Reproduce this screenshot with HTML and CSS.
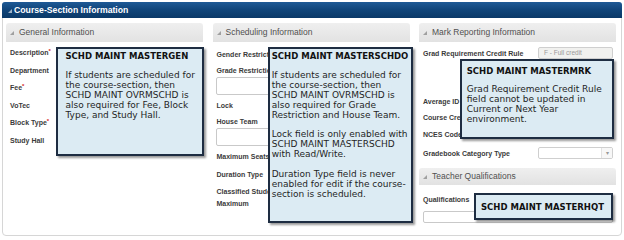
FILE: index.html
```html
<!DOCTYPE html>
<html lang="en">

<head>
    <meta charset="UTF-8">
    <title>Course-Section Information</title>
    <link rel="stylesheet" href="styles.css">
</head>

<body>

    <div class="section">
        <div class="section-head"><span class="caret"></span>Course-Section Information</div>

        <div class="columns">
            <!-- general -->
            <div class="panel">
                <div class="panel-head"><span class="caret"></span>General Information</div>
                <div class="panel-body general">
                    <div class="field"><label>Description<sup>*</sup></label></div>
                    <div class="field"><label>Department</label></div>
                    <div class="field"><label>Fee<sup>*</sup></label></div>
                    <div class="field"><label>VoTec</label></div>
                    <div class="field"><label>Block Type<sup>*</sup></label></div>
                    <div class="field"><label>Study Hall</label></div>
                </div>
            </div>

            <!-- scheduling -->
            <div class="panel">
                <div class="panel-head"><span class="caret"></span>Scheduling Information</div>
                <div class="panel-body sched">
                    <div class="field"><label>Gender Restriction</label></div>
                    <div class="field"><label>Grade Restriction</label></div>
                    <div class="box"></div>
                    <div class="field"><label>Lock</label></div>
                    <div class="field"><label>House Team</label></div>
                    <div class="box"></div>
                    <div class="field"><label>Maximum Seats</label></div>
                    <div class="field wide"><label>Duration Type</label></div>
                    <div class="field wide two"><label>Classified Students Maximum</label></div>
                </div>
            </div>

            <!-- mark reporting -->
            <div class="panel">
                <div class="panel-head"><span class="caret"></span>Mark Reporting Information</div>
                <div class="panel-body mark">
                    <div class="row">
                        <label>Grad Requirement Credit Rule</label>
                        <div class="ctl disabled">F - Full credit</div>
                    </div>
                    <div class="row avg"><label>Average ID</label></div>
                    <div class="row course"><label>Course Credit</label></div>
                    <div class="row nces"><label>NCES Code</label></div>
                    <div class="row gradebook">
                        <label>Gradebook Category Type</label>
                        <div class="ctl select"><span class="arrow">&#9662;</span></div>
                    </div>
                </div>
                <div class="panel-head sub"><span class="caret"></span>Teacher Qualifications</div>
                <div class="panel-body quals">
                    <div class="field"><label>Qualifications</label></div>
                    <div class="box small"></div>
                </div>
            </div>
        </div>

        <!-- help tips -->
        <div class="tip tip-gen">
            <p class="tip-title">SCHD MAINT MASTERGEN</p>
            <p>If students are scheduled for<br>the course-section, then<br>SCHD MAINT OVRMSCHD is<br>also required for Fee, Block<br>Type, and Study Hall.</p>
        </div>

        <div class="tip tip-schd">
            <p class="tip-title">SCHD MAINT MASTERSCHDO</p>
            <p>If students are scheduled for<br>the course-section, then<br>SCHD MAINT OVRMSCHD is<br>also required for Grade<br>Restriction and House Team.</p>
            <p>Lock field is only enabled with<br>SCHD MAINT MASTERSCHD<br>with Read/Write.</p>
            <p>Duration Type field is never<br>enabled for edit if the course-<br>section is scheduled.</p>
        </div>

        <div class="tip tip-mrk">
            <p class="tip-title">SCHD MAINT MASTERMRK</p>
            <p>Grad Requirement Credit Rule<br>field cannot be updated in<br>Current or Next Year<br>environment.</p>
        </div>

        <div class="tip tip-hqt">
            <p class="tip-title">SCHD MAINT MASTERHQT</p>
        </div>
    </div>

</body>

</html>
```

FILE: styles.css
```css
body {
    margin: 0;
    font-family: "Liberation Sans", Arial, sans-serif;
    background: #fff;
}

/* ----------------------------------------------------
   outer section
---------------------------------------------------- */
.section {
    position: relative;
    box-sizing: border-box;
    height: 234px;
    margin: 2px;
    border: 1px solid #d6d6d6;
    border-radius: 4px;
    background: #fff;
}

.section-head {
    height: 16px;
    margin: -1px -1px 0;
    padding-left: 6px;
    line-height: 16px;
    font-size: 8.7px;
    font-weight: bold;
    color: #fff;
    background: linear-gradient(to bottom, #1f5a96 0%, #104479 50%, #0a3867 100%);
    border-radius: 3px 3px 0 0;
}

.caret {
    display: inline-block;
    width: 0;
    height: 0;
    border-left: 4px solid transparent;
    border-bottom: 4px solid #a0a0a0;
    margin-right: 5px;
    vertical-align: 0;
}

.section-head .caret {
    border-bottom-color: rgba(255, 255, 255, 0.6);
    margin-right: 2px;
}

.columns {
    display: flex;
    gap: 9.5px;
    padding: 5px 5px 0 3px;
}

.panel {
    flex: 1;
}

.panel-head {
    height: 19px;
    padding-left: 4px;
    line-height: 19px;
    font-size: 8.5px;
    color: #505050;
    background: linear-gradient(to bottom, #efefef, #e2e2e2);
    border-radius: 3px 3px 0 0;
}

.panel-head.sub {
    height: 17px;
    line-height: 17px;
    margin-top: 9px;
}

label {
    display: block;
    font-size: 7px;
    font-weight: bold;
    color: #3b3b3b;
    white-space: nowrap;
}

label sup {
    font-size: 6px;
    line-height: 1;
    color: #d42020;
    vertical-align: 2px;
}

.field {
    height: 11px;
    line-height: 11px;
}

.box {
    box-sizing: border-box;
    height: 18px;
    background: #fff;
    border: 1px solid #c9c9c9;
    border-radius: 2px;
}

/* ----------------------------------------------------
   columns
---------------------------------------------------- */
.general {
    padding: 5px 4px 0;
}

.general .field {
    margin-bottom: 6.5px;
}

.sched {
    padding: 7px 4px 0 3px;
}

.sched label {
    padding-left: 1px;
}

.sched .field {
    margin-top: 5px;
}

.sched .field:first-child {
    margin-top: 0;
}

.sched .box {
    margin-top: 1px;
}

.sched .field.wide {
    margin-top: 6.5px;
}

.sched .field.two {
    height: 24px;
    line-height: 12px;
}

.sched .two label {
    width: 80px;
    white-space: normal;
}

.mark {
    padding: 5px 3px 0 4px;
}

.row {
    display: flex;
    align-items: center;
    height: 12px;
}

.row label {
    flex: 0 0 115px;
}

.row.avg { margin-top: 36px; }
.row.course { margin-top: 4px; }
.row.nces { margin-top: 5px; }
.row.gradebook { margin-top: 7px; }

.ctl {
    box-sizing: border-box;
    flex: 1;
    height: 12px;
    border: 1px solid #cfcfcf;
    border-radius: 2px;
}

.ctl.disabled {
    padding-left: 5px;
    line-height: 10px;
    font-size: 6.5px;
    color: #9a9a9a;
    background: #f1f1ef;
}

.ctl.select {
    display: flex;
    justify-content: flex-end;
    background: #fff;
}

.ctl .arrow {
    width: 10px;
    border-left: 1px solid #e2e2e2;
    background: #f7f7f7;
    font-size: 6px;
    line-height: 10px;
    text-align: center;
    color: #999;
}

.quals {
    padding: 8.5px 3px 0 4px;
}

.quals .box.small {
    height: 12px;
    margin: 6.5px 0 0 -0.5px;
}

/* ----------------------------------------------------
   help tips
---------------------------------------------------- */
.tip {
    position: absolute;
    box-sizing: border-box;
    background: #dcebf3;
    border: 2px solid #1e2d42;
    box-shadow: 2px 2px 2px rgba(0, 0, 0, 0.4);
    font-family: "DejaVu Sans", Verdana, sans-serif;
    font-size: 9px;
    line-height: 9.9px;
    color: #1f1f1f;
    white-space: nowrap;
}

.tip p {
    margin: 9.9px 0 0;
}

.tip .tip-title {
    margin: 0 0 10px;
    font-size: 8.5px;
    font-weight: bold;
    line-height: 10px;
    color: #111;
}

.tip-title + p {
    margin-top: 0;
}

.tip-gen {
    left: 53px;
    top: 44px;
    width: 148px;
    height: 109px;
    padding: 2px 6px 0 7.5px;
}

.tip-schd {
    left: 265px;
    top: 44px;
    width: 145px;
    height: 176px;
    padding: 2px 0 0 1.7px;
}

.tip-mrk {
    left: 457px;
    top: 56px;
    width: 154px;
    height: 80px;
    padding: 5px 0 0 4.7px;
}

.tip-mrk .tip-title {
    margin-bottom: 9px;
}

.tip-hqt {
    display: flex;
    align-items: center;
    left: 471px;
    top: 190px;
    width: 139px;
    height: 27px;
    padding-left: 5px;
}

.tip-hqt .tip-title {
    margin: 0;
}
```
